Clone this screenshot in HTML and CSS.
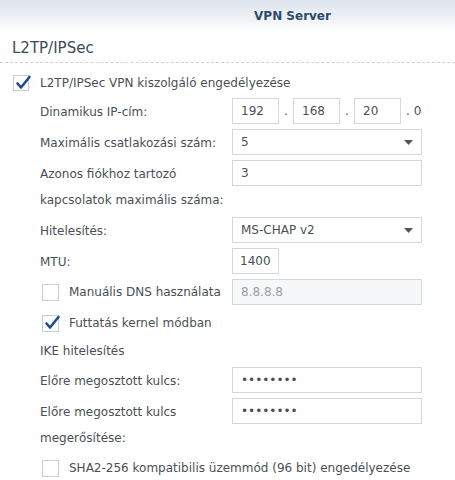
FILE: index.html
```html
<!DOCTYPE html>
<html lang="hu">
<head>
    <meta charset="UTF-8">
    <title>VPN Server</title>
    <link rel="stylesheet" href="styles.css">
</head>
<body>
    <header class="titlebar">VPN Server</header>

    <h1 class="section-title">L2TP/IPSec</h1>

    <div class="form">
        <div class="row">
            <span class="checkbox checked">
                <svg width="16" height="16" viewBox="0 0 16 16"><path d="M3.5 8.5 L7 12.5 L15.5 2" /></svg>
            </span>
            <span class="check-label">L2TP/IPSec VPN kiszolgáló engedélyezése</span>
        </div>

        <div class="sub">
            <div class="row">
                <label class="label">Dinamikus IP-cím:</label>
                <div class="ip">
                    <input class="field ip-part" type="text" value="192">
                    <span class="ip-dot">.</span>
                    <input class="field ip-part" type="text" value="168">
                    <span class="ip-dot">.</span>
                    <input class="field ip-part" type="text" value="20">
                    <span class="ip-last">. 0</span>
                </div>
            </div>

            <div class="row">
                <label class="label">Maximális csatlakozási szám:</label>
                <div class="field select">
                    <span>5</span>
                    <svg width="9" height="5" viewBox="0 0 9 5"><path d="M0 0 H9 L4.5 5 Z" /></svg>
                </div>
            </div>

            <div class="row">
                <label class="label">Azonos fiókhoz tartozó kapcsolatok maximális száma:</label>
                <input class="field" type="text" value="3">
            </div>

            <div class="row">
                <label class="label">Hitelesítés:</label>
                <div class="field select">
                    <span>MS-CHAP v2</span>
                    <svg width="9" height="5" viewBox="0 0 9 5"><path d="M0 0 H9 L4.5 5 Z" /></svg>
                </div>
            </div>

            <div class="row">
                <label class="label">MTU:</label>
                <input class="field short" type="text" value="1400">
            </div>

            <div class="row">
                <div class="label check-group">
                    <span class="checkbox"></span>
                    <span class="check-label">Manuális DNS használata</span>
                </div>
                <input class="field" type="text" value="8.8.8.8" disabled>
            </div>

            <div class="row">
                <div class="check-group">
                    <span class="checkbox checked">
                        <svg width="16" height="16" viewBox="0 0 16 16"><path d="M3.5 8.5 L7 12.5 L15.5 2" /></svg>
                    </span>
                    <span class="check-label">Futtatás kernel módban</span>
                </div>
            </div>

            <div class="row group-title">IKE hitelesítés</div>

            <div class="row">
                <label class="label">Előre megosztott kulcs:</label>
                <input class="field" type="password" value="12345678">
            </div>

            <div class="row">
                <label class="label">Előre megosztott kulcs megerősítése:</label>
                <input class="field" type="password" value="12345678">
            </div>

            <div class="row">
                <div class="check-group">
                    <span class="checkbox"></span>
                    <span class="check-label">SHA2-256 kompatibilis üzemmód (96 bit) engedélyezése</span>
                </div>
            </div>
        </div>
    </div>
</body>
</html>
```

FILE: styles.css
```css
* {
    margin: 0;
    padding: 0;
    box-sizing: border-box;
}

body {
    font-family: "DejaVu Sans", Verdana, sans-serif;
    font-size: 12px;
    color: #4a4f55;
    background: #fff;
    width: 455px;
    height: 480px;
    overflow: hidden;
}

.titlebar {
    height: 31px;
    display: flex;
    align-items: center;
    justify-content: center;
    padding-left: 130px;
    font-weight: bold;
    color: #30496a;
    background: linear-gradient(180deg, #dce4ed 0%, #eef2f6 60%, #ffffff 100%);
}

.section-title {
    font-size: 15px;
    font-weight: normal;
    color: #3c4a59;
    line-height: 26px;
    padding: 4px 0 1px 12px;
    border-bottom: 1px dashed #d0d4d8;
}

.form {
    padding: 6px 0 0 13px;
}

.row {
    display: flex;
    align-items: flex-start;
    min-height: 26px;
    margin-bottom: 5px;
}

.form > .row {
    margin-bottom: 3px;
}

.sub {
    padding-left: 27px;
}

.label {
    width: 192px;
    flex-shrink: 0;
    line-height: 26px;
    padding-top: 1px;
    margin-bottom: -1px;
}

.group-title {
    min-height: 21px;
    line-height: 21px;
}

.check-group {
    display: flex;
    align-items: center;
    height: 26px;
    margin-left: 2px;
}

.check-group.label {
    width: 190px;
    padding-top: 0;
    margin-bottom: 0;
}

.checkbox {
    width: 17px;
    height: 17px;
    flex-shrink: 0;
    border: 1px solid #c9ced3;
    background: #fff;
    position: relative;
    margin-right: 10px;
}

.form > .row .checkbox {
    width: 16px;
    height: 16px;
    margin-top: 6px;
    margin-right: 11px;
}

.form > .row .check-label {
    line-height: 26px;
    padding-top: 1px;
    margin-bottom: -1px;
}

.checkbox svg {
    position: absolute;
    left: 0;
    top: -1px;
    overflow: visible;
}

.checkbox path {
    fill: none;
    stroke: #1f4e86;
    stroke-width: 2.6;
    stroke-linecap: round;
    stroke-linejoin: round;
}

.field {
    width: 190px;
    height: 26px;
    border: 1px solid #d3d8dc;
    background: #fff;
    font-family: "DejaVu Sans", Verdana, sans-serif;
    font-size: 12px;
    color: #4a4f55;
    padding: 0 8px;
    outline: none;
}

.field:disabled {
    background: #f5f7f9;
    color: #9aa0a6;
}

.field.short {
    width: 47px;
    padding: 0 7px;
}

.select {
    display: flex;
    align-items: center;
    justify-content: space-between;
}

.select path {
    fill: #505458;
}

.ip {
    display: flex;
    align-items: center;
}

.ip-part {
    width: 47px;
}

.ip-dot {
    width: 14px;
    text-align: center;
}

.ip-last {
    padding-left: 5px;
}
```
